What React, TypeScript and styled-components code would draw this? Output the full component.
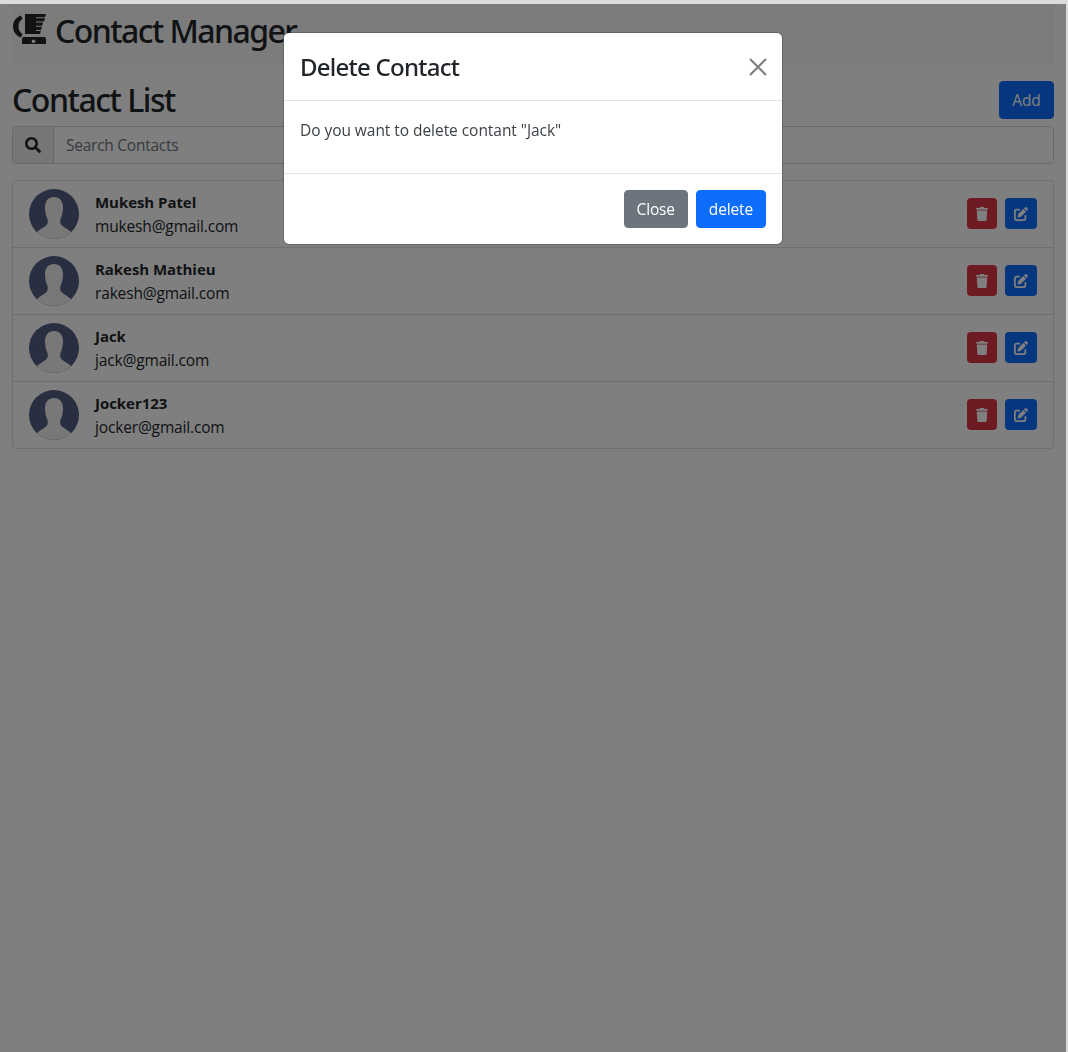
import React from "react";
import styled, { createGlobalStyle } from "styled-components";
import { FaSearch } from "react-icons/fa";
import { FaTrash, FaPenToSquare } from "react-icons/fa6";

const font = `"Open Sans", "Noto Sans", "Liberation Sans", sans-serif`;
const headingFont = `"Noto Sans", "Open Sans", "Liberation Sans", sans-serif`;

const Global = createGlobalStyle`
  html, body { margin: 0; padding: 0; height: 100%; background: #dcdcdc; }
  body { font-family: ${font}; font-size: 16px; line-height: 1.5; color: #212529; overflow: hidden; }
  * { box-sizing: border-box; }
`;

const Page = styled.div`
  margin: 4px 2px 0 0;
  height: 1048px;
  background: #fff;
  padding: 0 12px;
`;

const Navbar = styled.header`
  height: 61px;
  background: #f8f9fa;
  display: flex;
  align-items: flex-start;
  padding-top: 5px;
  gap: 7px;
`;

const BrandText = styled.h1`
  margin: 0;
  font-family: ${headingFont};
  font-size: 32px;
  font-weight: 500;
  line-height: 44px;
  letter-spacing: -1.55px;
`;

const Logo = styled.svg`
  width: 36px;
  height: 36px;
  flex: none;
  margin-top: 4px;
`;

const TitleRow = styled.div`
  display: flex;
  align-items: center;
  justify-content: space-between;
  margin-top: 16px;
  height: 38px;
`;

const Title = styled.h2`
  margin: 0;
  font-family: ${headingFont};
  font-size: 32px;
  font-weight: 500;
  line-height: 38px;
  letter-spacing: -1.45px;
`;

const Button = styled.button<{ $tone: "primary" | "secondary" }>`
  height: 38px;
  min-width: 55px;
  padding: 2px 12px 0;
  border: 1px solid ${(p) => (p.$tone === "primary" ? "#0d6efd" : "#6c757d")};
  border-radius: 4px;
  background: ${(p) => (p.$tone === "primary" ? "#0d6efd" : "#6c757d")};
  color: #fff;
  font-family: ${font};
  font-size: 15.5px;
  letter-spacing: -0.15px;
  line-height: 1;
`;

const SearchGroup = styled.div`
  margin-top: 7px;
  height: 38px;
  display: flex;
  border: 1px solid #ced4da;
  border-radius: 4px;
  overflow: hidden;
`;

const SearchAddon = styled.span`
  width: 41px;
  flex: none;
  display: flex;
  align-items: center;
  justify-content: center;
  background: #e9ecef;
  border-right: 1px solid #ced4da;
  color: #212529;
  font-size: 16px;
`;

const SearchInput = styled.input`
  flex: 1;
  border: 0;
  outline: 0;
  padding: 0 12px;
  background: #fff;
  font-family: ${font};
  font-size: 15.5px;
  letter-spacing: -0.25px;
  &::placeholder { color: #6c757d; opacity: 1; }
`;

const List = styled.ul`
  margin: 16px 0 0;
  padding: 0;
  list-style: none;
  border: 1px solid rgba(0, 0, 0, 0.125);
  border-radius: 4px;
`;

const Row = styled.li`
  height: 67px;
  display: flex;
  align-items: center;
  gap: 16px;
  padding: 0 16px;
  & + & { border-top: 1px solid rgba(0, 0, 0, 0.125); }
  &:first-child { height: 66px; }
`;

const Avatar = styled.svg`
  width: 50px;
  height: 50px;
  flex: none;
`;

const Info = styled.div`
  flex: 1;
  min-width: 0;
`;

const Name = styled.div`
  font-weight: 700;
  font-size: 15px;
  line-height: 24px;
  letter-spacing: -0.05px;
`;

const Email = styled.div`
  font-size: 15.5px;
  line-height: 24px;
  letter-spacing: -0.16px;
`;

const Actions = styled.div`
  display: flex;
  gap: 8px;
  margin-top: -1px;
`;

const IconButton = styled.button<{ $tone: "danger" | "primary" }>`
  width: ${(p) => (p.$tone === "danger" ? "30px" : "32px")};
  height: 31px;
  padding: 0;
  display: flex;
  align-items: center;
  justify-content: center;
  border: 0;
  border-radius: 4px;
  background: ${(p) => (p.$tone === "danger" ? "#dc3545" : "#0d6efd")};
  color: #fff;
  font-size: 14px;
`;

const Backdrop = styled.div`
  position: fixed;
  top: 4px;
  left: 0;
  right: 2px;
  bottom: 0;
  background: rgba(0, 0, 0, 0.5);
`;

const Modal = styled.div`
  position: fixed;
  top: 33px;
  left: 284px;
  width: 498px;
  height: 211px;
  background: #fff;
  border-radius: 5px;
  box-shadow: 0 0 0 1px rgba(0, 0, 0, 0.2);
  display: flex;
  flex-direction: column;
`;

const ModalHeader = styled.div`
  height: 68px;
  flex: none;
  display: flex;
  align-items: center;
  justify-content: space-between;
  padding: 0 16px;
  border-bottom: 1px solid #dee2e6;
`;

const ModalTitle = styled.h5`
  margin: 0;
  font-family: ${headingFont};
  font-size: 24px;
  font-weight: 500;
  letter-spacing: -0.75px;
  line-height: 34px;
`;

const CloseIcon = styled.svg`
  width: 18px;
  height: 18px;
  margin-right: -1px;
`;

const ModalBody = styled.div`
  height: 72px;
  flex: none;
  padding: 17px 16px 0;
  font-size: 15.5px;
  line-height: 24px;
  letter-spacing: -0.05px;
  color: #3d4247;
`;

const ModalFooter = styled.div`
  flex: 1;
  display: flex;
  align-items: center;
  justify-content: flex-end;
  gap: 8px;
  padding: 0 16px;
  border-top: 1px solid #dee2e6;
`;

const contacts = [
  { name: "Mukesh Patel", email: "mukesh@gmail.com" },
  { name: "Rakesh Mathieu", email: "rakesh@gmail.com" },
  { name: "Jack", email: "jack@gmail.com" },
  { name: "Jocker123", email: "jocker@gmail.com" },
];

const PersonAvatar = () => (
  <Avatar viewBox="0 0 50 50">
    <defs>
      <clipPath id="avatarClip">
        <circle cx="25" cy="25" r="25" />
      </clipPath>
    </defs>
    <g clipPath="url(#avatarClip)">
      <rect width="50" height="50" fill="#535d80" />
      <path
        d="M25 8C19.500 8 16 12 16 18C16 23 17 27 18.500 30C19 32 19 34 18 35.500C16 38 11 40 8 43L8 50H42L42 43C39 40 34 38 32 35.500C31 34 31 32 31.500 30C33 27 34 23 34 18C34 12 30.500 8 25 8Z"
        fill="#f1f1f3"
      />
    </g>
  </Avatar>
);

export default function App() {
  return (
    <>
      <Global />
      <Page>
        <Navbar>
          <Logo viewBox="0 0 36 36">
            <path d="M9 2.500C4 4 1 8.500 1 13.500s3 9 8 11l1.500-3.500c-2.500-1.500-4-4-4-7.500s1.500-6 4-7.500L9 2.500z" fill="#212529" />
            <path
              d="M13 1h21l-1 3.200H24v1h9l-1 3.300h-8v1h7l-1 3.200h-6v1h6l-1 3.300h-5v1h5l-1 3H13z"
              fill="#212529"
            />
            <path
              fillRule="evenodd"
              d="M12 24h20a2 2 0 0 1 2 2v5H10v-5a2 2 0 0 1 2-2zm9.500 2.500a1.800 1.800 0 1 0 .01 0z"
              fill="#212529"
            />
          </Logo>
          <BrandText>Contact Manager</BrandText>
        </Navbar>
        <TitleRow>
          <Title>Contact List</Title>
          <Button $tone="primary">Add</Button>
        </TitleRow>
        <SearchGroup>
          <SearchAddon>
            <FaSearch />
          </SearchAddon>
          <SearchInput placeholder="Search Contacts" />
        </SearchGroup>
        <List>
          {contacts.map((c) => (
            <Row key={c.email}>
              <PersonAvatar />
              <Info>
                <Name>{c.name}</Name>
                <Email>{c.email}</Email>
              </Info>
              <Actions>
                <IconButton $tone="danger">
                  <FaTrash />
                </IconButton>
                <IconButton $tone="primary">
                  <FaPenToSquare />
                </IconButton>
              </Actions>
            </Row>
          ))}
        </List>
      </Page>
      <Backdrop />
      <Modal>
        <ModalHeader>
          <ModalTitle>Delete Contact</ModalTitle>
          <CloseIcon viewBox="0 0 18 18">
            <path d="M1 1l16 16M17 1L1 17" stroke="#7d7d7d" strokeWidth="2" fill="none" />
          </CloseIcon>
        </ModalHeader>
        <ModalBody>Do you want to delete contant "Jack"</ModalBody>
        <ModalFooter>
          <Button $tone="secondary">Close</Button>
          <Button $tone="primary">delete</Button>
        </ModalFooter>
      </Modal>
    </>
  );
}
